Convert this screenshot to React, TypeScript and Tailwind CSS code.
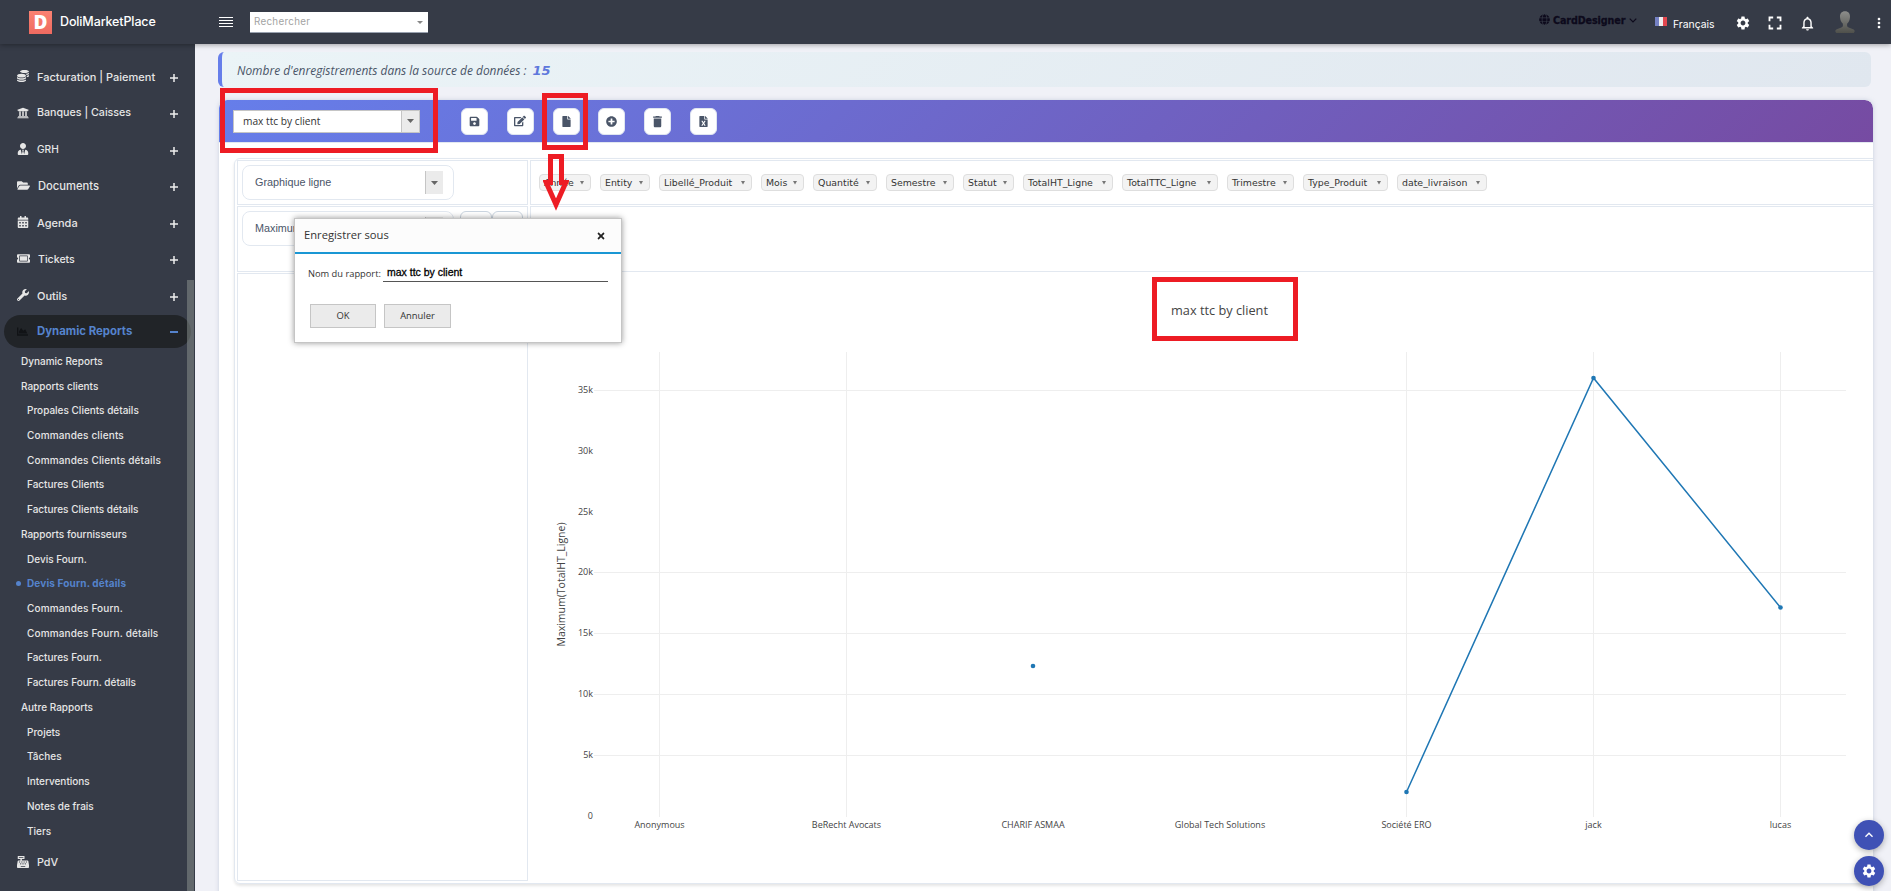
import type { ReactNode } from "react"
import clsx from "clsx"
import type { IconType } from "react-icons"
import {
    FaCalendarAlt,
    FaCashRegister,
    FaChartArea,
    FaCoins,
    FaEdit,
    FaFile,
    FaFileExcel,
    FaFolderOpen,
    FaGlobe,
    FaPlusCircle,
    FaSave,
    FaTicketAlt,
    FaTimes,
    FaUniversity,
    FaUserTie,
    FaWrench,
} from "react-icons/fa"
import {
    MdDelete,
    MdFullscreen,
    MdKeyboardArrowUp,
    MdMoreVert,
    MdNotificationsNone,
    MdSettings,
} from "react-icons/md"

interface MenuItem {
    label: string
    icon: IconType
    text: string
    wide?: boolean
}

const MENU: MenuItem[] = [
    { label: "Facturation | Paiement", icon: FaCoins, text: "text-[11px]" },
    { label: "Banques | Caisses", icon: FaUniversity, text: "text-[10.7px]" },
    { label: "GRH", icon: FaUserTie, text: "text-[10.2px]" },
    { label: "Documents", icon: FaFolderOpen, text: "text-[11.2px]", wide: true },
    { label: "Agenda", icon: FaCalendarAlt, text: "text-[11px]" },
    { label: "Tickets", icon: FaTicketAlt, text: "text-[10.6px]", wide: true },
    { label: "Outils", icon: FaWrench, text: "text-[11px]" },
]

interface SubItem {
    label: string
    group?: boolean
    active?: boolean
}

const SUBMENU: SubItem[] = [
    { label: "Dynamic Reports", group: true },
    { label: "Rapports clients", group: true },
    { label: "Propales Clients détails" },
    { label: "Commandes clients" },
    { label: "Commandes Clients détails" },
    { label: "Factures Clients" },
    { label: "Factures Clients détails" },
    { label: "Rapports fournisseurs", group: true },
    { label: "Devis Fourn." },
    { label: "Devis Fourn. détails", active: true },
    { label: "Commandes Fourn." },
    { label: "Commandes Fourn. détails" },
    { label: "Factures Fourn." },
    { label: "Factures Fourn. détails" },
    { label: "Autre Rapports", group: true },
    { label: "Projets" },
    { label: "Tâches" },
    { label: "Interventions" },
    { label: "Notes de frais" },
    { label: "Tiers" },
]

const FIELDS = [
    { label: "Année", width: "w-[52px]" },
    { label: "Entity", width: "w-[50px]" },
    { label: "Libellé_Produit", width: "w-[93px]" },
    { label: "Mois", width: "w-[43px]" },
    { label: "Quantité", width: "w-[64px]" },
    { label: "Semestre", width: "w-[68px]" },
    { label: "Statut", width: "w-[51px]" },
    { label: "TotalHT_Ligne", width: "w-[90px]" },
    { label: "TotalTTC_Ligne", width: "w-[96px]" },
    { label: "Trimestre", width: "w-[67px]" },
    { label: "Type_Produit", width: "w-[85px]" },
    { label: "date_livraison", width: "w-[90px]" },
]

function Caret({ className = "h-1 w-[7px]" }: { className?: string }) {
    return (
        <svg viewBox="0 0 8 4" preserveAspectRatio="none" className={className}>
            <path d="M0 0h8L4 4z" fill="currentColor" />
        </svg>
    )
}

function Plus() {
    return (
        <svg viewBox="0 0 8 8" className="h-2 w-2 text-[#eee]">
            <path d="M4 0v8M0 4h8" stroke="currentColor" strokeWidth="1.5" />
        </svg>
    )
}

function Header() {
    return (
        <header className="relative z-10 flex h-11 items-center bg-[#363b47] text-white shadow-[0_1px_5px_rgba(0,0,0,0.35)]">
            <div className="flex w-[219px] items-center pl-[29px]">
                <div className="flex h-[23px] w-[23px] items-center justify-center bg-linear-to-b from-[#fb8272] to-[#ee6a60] font-['Open_Sans'] text-[19px] leading-none font-extrabold">
                    D
                </div>
                <span className="ml-2 font-[Inter] text-[12.5px] font-medium tracking-[-0.01em] whitespace-nowrap">DoliMarketPlace</span>
            </div>
            <div className="-mt-px flex w-[14px] flex-col gap-[2px]">
                <span className="h-px bg-white" />
                <span className="h-px bg-white" />
                <span className="h-px bg-white" />
                <span className="h-px bg-white" />
            </div>
            <div className="ml-[17px] flex h-[21px] w-[178px] items-center justify-between border-b border-gray-400 bg-white pt-px pr-[5px] pl-1 font-[Inter] text-[9.8px] tracking-[0.03em] text-[#a3a3a3]">
                Rechercher
                <Caret className="h-[3px] w-[6px] text-[#888]" />
            </div>

            <div className="ml-auto flex items-center">
                <div className="-mt-[4px] flex items-center text-[#0d0a1c]">
                    <FaGlobe className="size-[11px]" />
                    <span className="mt-[2px] ml-[3px] w-[74px] font-['DejaVu_Sans'] text-[9.6px] font-bold tracking-[-0.01em] whitespace-nowrap [-webkit-text-stroke:0.3px]">
                        CardDesigner
                    </span>
                    <svg viewBox="0 0 8 5" className="mt-[2px] ml-[2px] h-[5px] w-2">
                        <path d="M0.7 0.7L4 4L7.3 0.700" fill="none" stroke="currentColor" strokeWidth="1.200" />
                    </svg>
                </div>
                <div className="mt-[4px] ml-[18px] flex items-center">
                    <span className="-mt-1 flex h-[9px] w-3">
                        <span className="flex-1 bg-[#7581c4]" />
                        <span className="flex-1 bg-[#eeeeee]" />
                        <span className="flex-1 bg-[#e2474f]" />
                    </span>
                    <span className="mt-px ml-[6px] w-[42px] font-[Inter] text-[10.4px] whitespace-nowrap">Français</span>
                </div>
                <MdSettings className="mt-[2px] ml-[20px] size-4" />
                <MdFullscreen className="mt-[2px] ml-[13px] size-[22px]" />
                <MdNotificationsNone className="mt-[2px] ml-[13px] size-[17px]" />
                <svg viewBox="0 0 20 22" className="ml-[19px] h-[22px] w-5">
                    <defs>
                        <linearGradient id="avatar" x1="0" y1="0" x2="0" y2="1">
                            <stop offset="0" stopColor="#8d8d8b" />
                            <stop offset="1" stopColor="#4f504b" />
                        </linearGradient>
                    </defs>
                    <path
                        d="M10 0.3C6.600 0.300 4.800 2.600 5 6c0.200 3.200 1.200 5.300 2.900 6.700v2.500C7 16.600 3.500 17.300 1.300 18.600C0 19.500 0 21 1.300 22h17.400c1.300-1 1.300-2.500 0-3.400c-2.200-1.300-5.700-2-6.600-3.400v-2.500C13.800 11.300 14.800 9.200 15 6C15.200 2.600 13.400 0.300 10 0.300z"
                        fill="url(#avatar)"
                    />
                </svg>
                <MdMoreVert className="mt-[2px] mr-[4px] ml-[16px] size-4" />
            </div>
        </header>
    )
}

function Sidebar() {
    return (
        <nav className="relative h-[847px] w-[195px] shrink-0 bg-[#363b47] pt-[14px] font-[Inter] text-[#e6e6e6]">
            {MENU.map(({ label, icon: Icon, text, wide }) => (
                <div key={label} className="flex h-[36.5px] items-center pr-[17px] pl-[17px]">
                    <Icon className={wide ? "size-[13px]" : "size-3"} />
                    <span className={clsx("mt-[1.5px] ml-2 flex-1 font-medium whitespace-nowrap", text)}>{label}</span>
                    <span className="mt-[3px]">
                        <Plus />
                    </span>
                </div>
            ))}

            <div className="mt-[1px] ml-1 flex h-[33px] w-[187px] items-center rounded-full bg-[#212428] pr-[13px] pl-[13px] text-[#5583cc]">
                <FaChartArea className="size-[11px] text-[#111316]" />
                <span className="mt-[1.5px] ml-[9px] flex-1 text-[11.4px] font-bold">Dynamic Reports</span>
                <span className="mt-[2px] h-[1.5px] w-2 bg-[#5583cc]" />
            </div>

            <ul className="mt-[1.5px]">
                {SUBMENU.map(({ label, group, active }) => (
                    <li
                        key={label}
                        className={clsx(
                            "relative flex h-[24.73px] items-center text-[10px] whitespace-nowrap",
                            group ? "pl-[21px]" : "pl-[27px]",
                            active ? "font-bold tracking-[0.015em] text-[#5583cc]" : "font-medium",
                            label.startsWith("Commandes") && "tracking-[0.015em]",
                        )}
                    >
                        {active && <span className="absolute top-[10px] left-4 size-[5px] rounded-full bg-[#5583cc]" />}
                        {label}
                    </li>
                ))}
            </ul>

            <div className="mt-[6px] flex h-[26px] items-center pl-[17px]">
                <FaCashRegister className="size-3" />
                <span className="mt-px ml-2 text-[10.8px] font-medium">PdV</span>
            </div>

            {/* scrollbar thumb */}
            <div className="absolute right-[1px] bottom-0 h-[611px] w-[7px] bg-[#8e9591]/50" />
        </nav>
    )
}

function ToolButton({ icon: Icon, className }: { icon: IconType; className?: string }) {
    return (
        <button className="flex size-[27px] items-center justify-center rounded-md border border-[#dfe5f0] bg-white text-[#4a5568]">
            <Icon className={className ?? "size-[11px]"} />
        </button>
    )
}

function Toolbar() {
    return (
        <div className="flex h-[42px] items-center rounded-t-lg bg-linear-[135deg] from-[#667eea] to-[#764ba2] pl-[14px]">
            <div className="flex h-[23px] w-[187px] border border-[#c5c5c5] bg-white">
                <span className="flex flex-1 items-center pt-px pl-[9px] font-['Open_Sans'] text-[10.2px] text-[#333]">max ttc by client</span>
                <span className="flex w-[18px] items-center justify-center border-l border-[#c5c5c5] bg-[#ebebeb] text-[#666]">
                    <Caret />
                </span>
            </div>
            <div className="ml-[41px] flex gap-[18.75px]">
                <ToolButton icon={FaSave} />
                <ToolButton icon={FaEdit} className="size-[12px]" />
                <ToolButton icon={FaFile} />
                <ToolButton icon={FaPlusCircle} />
                <ToolButton icon={MdDelete} className="size-[15px]" />
                <ToolButton icon={FaFileExcel} />
            </div>
        </div>
    )
}

function SelectBox({ label }: { label: string }) {
    return (
        <div className="flex h-[35px] w-[212px] shrink-0 items-center justify-between rounded-lg border border-[#e2e8f0] bg-white pr-[10px] pl-[12px] font-['Liberation_Sans'] text-[10.8px] text-[#4a5568]">
            {label}
            <span className="flex h-[23px] w-[18px] items-center justify-center border-l border-[#c5c5c5] bg-[#ebebeb] text-[#666]">
                <Caret />
            </span>
        </div>
    )
}

function Cell({ className, children }: { className?: string; children?: ReactNode }) {
    return <div className={clsx("border border-[#e2e8f0]", className)}>{children}</div>
}

// plot area in page pixels, shifted by the svg's viewBox
const TICKS = [
    { label: "35k", y: 390.5, line: true },
    { label: "30k", y: 451.3, line: false },
    { label: "25k", y: 512.2, line: false },
    { label: "20k", y: 572.5, line: true },
    { label: "15k", y: 633.5, line: true },
    { label: "10k", y: 694.5, line: true },
    { label: "5k", y: 755.5, line: true },
    { label: "0", y: 816.3, line: false },
]

const CLIENTS = [
    { label: "Anonymous", x: 659.5, line: true },
    { label: "BeRecht Avocats", x: 846.5, line: true },
    { label: "CHARIF ASMAA", x: 1033, line: false, y: 666 },
    { label: "Global Tech Solutions", x: 1220, line: false },
    { label: "Société ERO", x: 1406.5, line: true, y: 792 },
    { label: "jack", x: 1593.5, line: true, y: 378 },
    { label: "lucas", x: 1780.5, line: true, y: 607.5 },
]

function Chart() {
    return (
        <svg viewBox="530 273 1343 608" className="h-[608px] w-[1343px] font-['Open_Sans']" fill="#444">
            <g stroke="#eee">
                {TICKS.filter((t) => t.line).map((t) => (
                    <path key={t.label} d={`M594 ${t.y}H1846`} />
                ))}
                {CLIENTS.filter((c) => c.line).map((c) => (
                    <path key={c.label} d={`M${c.x} 352V817`} />
                ))}
            </g>
            <text x="1219.500" y="315" fontSize="12.750" textAnchor="middle">
                max ttc by client
            </text>
            <text transform="translate(565 584.500) rotate(-90)" fontSize="10.500" textAnchor="middle">
                Maximum(TotalHT_Ligne)
            </text>
            <g fontSize="9">
                {TICKS.map((t) => (
                    <text key={t.label} x="593" y={t.y + 2.5} textAnchor="end">
                        {t.label}
                    </text>
                ))}
                {CLIENTS.map((c) => (
                    <text key={c.label} x={c.x} y="828" textAnchor="middle">
                        {c.label}
                    </text>
                ))}
            </g>
            <polyline points="1406.500,792 1593.500,378 1780.500,607.500" fill="none" stroke="#1f77b4" strokeWidth="1.500" />
            {CLIENTS.filter((c) => c.y).map((c) => (
                <circle key={c.label} cx={c.x} cy={c.y} r="2.300" fill="#1f77b4" />
            ))}
        </svg>
    )
}

function PivotTable() {
    return (
        <div className="mt-[15px] ml-[15px] h-[726px] w-[1700px] rounded-md border border-[#e2e8f0] pt-px pl-[2px] shadow-[0_2px_3px_rgba(0,0,0,0.1)]">
            <div className="grid grid-cols-[291px_1fr] grid-rows-[45px_66px_608px] gap-x-[2px] gap-y-px">
                <Cell className="p-1">
                    <SelectBox label="Graphique ligne" />
                </Cell>
                <Cell className="flex items-center gap-[9px] pl-[8px]">
                    {FIELDS.map(({ label, width }) => (
                        <span
                            key={label}
                            className={clsx(
                                "flex h-[17px] items-center justify-between rounded border border-[#dedede] bg-[#f3f3f3] pt-px pr-[6px] pl-1 font-['DejaVu_Sans'] text-[9.4px] whitespace-nowrap text-[#333]",
                                width,
                            )}
                        >
                            {label}
                            <Caret className="h-[3.5px] w-1 text-[#777]" />
                        </span>
                    ))}
                </Cell>
                <Cell className="flex items-start p-1">
                    <SelectBox label="Maximum" />
                    <span className="ml-[6px] h-6 w-8 rounded-md border border-[#cbd5e0]" />
                    <span className="h-6 w-8 rounded-md border border-[#cbd5e0]" />
                </Cell>
                <Cell />
                <Cell />
                <Chart />
            </div>
        </div>
    )
}

function SaveAsDialog() {
    return (
        <div className="absolute top-[218px] left-[294px] z-20 h-[125px] w-[328px] border border-[#c5c5c5] bg-white font-['Open_Sans'] text-[#333] shadow-[0_0_6px_rgba(0,0,0,0.4)]">
            <div className="flex h-[35px] items-center justify-between border-b-2 border-[#1a97d4] bg-[#fcfcfc] pr-[15px] pl-[9px] text-[11.2px]">
                Enregistrer sous
                <FaTimes className="size-[10px] text-[#222]" />
            </div>
            <div className="mt-[7px] flex h-[21px] items-end pl-[13px]">
                <span className="w-[75px] pb-px text-[9.3px] whitespace-nowrap">Nom du rapport:</span>
                <span className="h-[21px] w-[225px] border-b border-[#555] pl-1 font-['Liberation_Sans'] text-[10.5px] leading-[22px] text-black [-webkit-text-stroke:0.3px]">
                    max ttc by client
                </span>
            </div>
            <div className="mt-[22px] flex gap-2 pl-[15px] text-[9.4px]">
                <button className="h-6 w-[66px] border border-[#c5c5c5] bg-[#ebebeb] pt-px">OK</button>
                <button className="h-6 w-[67px] border border-[#c5c5c5] bg-[#ebebeb] pt-px">Annuler</button>
            </div>
        </div>
    )
}

function Highlights() {
    return (
        <>
            <div className="absolute top-[88px] left-[220px] h-[65px] w-[218px] border-5 border-[#ed1c24]" />
            <div className="absolute top-[93px] left-[542px] h-[57px] w-[46px] border-5 border-[#ed1c24]" />
            <div className="absolute top-[277px] left-[1152px] h-[64px] w-[146px] border-5 border-[#ed1c24]" />
            <svg viewBox="0 0 26 57" className="absolute top-[154px] left-[543px] z-30 h-[57px] w-[26px]">
                <path d="M7.500 2.500H18.500V28.500H22.800L13 50.600L3.200 28.500H7.500z" fill="none" stroke="#ed1c24" strokeWidth="5" />
            </svg>
        </>
    )
}

function FloatingButtons() {
    return (
        <div className="absolute top-[820px] left-[1854px] z-20 flex flex-col gap-[6px] text-white">
            <button className="flex size-[30px] items-center justify-center rounded-full bg-[#3f51b5] shadow-[0_2px_6px_rgba(0,0,0,0.3)]">
                <MdKeyboardArrowUp className="size-4" />
            </button>
            <button className="flex size-[30px] items-center justify-center rounded-full bg-[#3f51b5] shadow-[0_2px_6px_rgba(0,0,0,0.3)]">
                <MdSettings className="size-4" />
            </button>
        </div>
    )
}

export default function App() {
    return (
        <div className="relative h-[891px] w-[1891px] overflow-hidden bg-[#f0f1f7]">
            <Header />
            <div className="flex">
                <Sidebar />
                <main className="min-w-0 flex-1 pt-[8px] pl-[23px]">
                    <div className="flex h-[35px] w-[1653px] items-center rounded-md border-l-4 border-[#667eea] bg-linear-[135deg] from-[#ebf4f7] to-[#e0e7ef] pt-[2px] pl-[15px] font-['Open_Sans'] text-[11.95px] text-[#4a5568] italic">
                        Nombre d'enregistrements dans la source de données :
                        <span className="ml-[6px] font-['DejaVu_Sans'] text-[13px] font-bold text-[#5f78dc]">15</span>
                    </div>
                    <section className="mt-[13px] ml-px h-[820px] w-[1654px] overflow-hidden rounded-t-lg bg-white shadow-[0_0_4px_rgba(160,175,200,0.5)]">
                        <Toolbar />
                        <div className="border-t border-[#e2e8f0]">
                            <PivotTable />
                        </div>
                    </section>
                </main>
            </div>
            <SaveAsDialog />
            <Highlights />
            <FloatingButtons />
        </div>
    )
}
